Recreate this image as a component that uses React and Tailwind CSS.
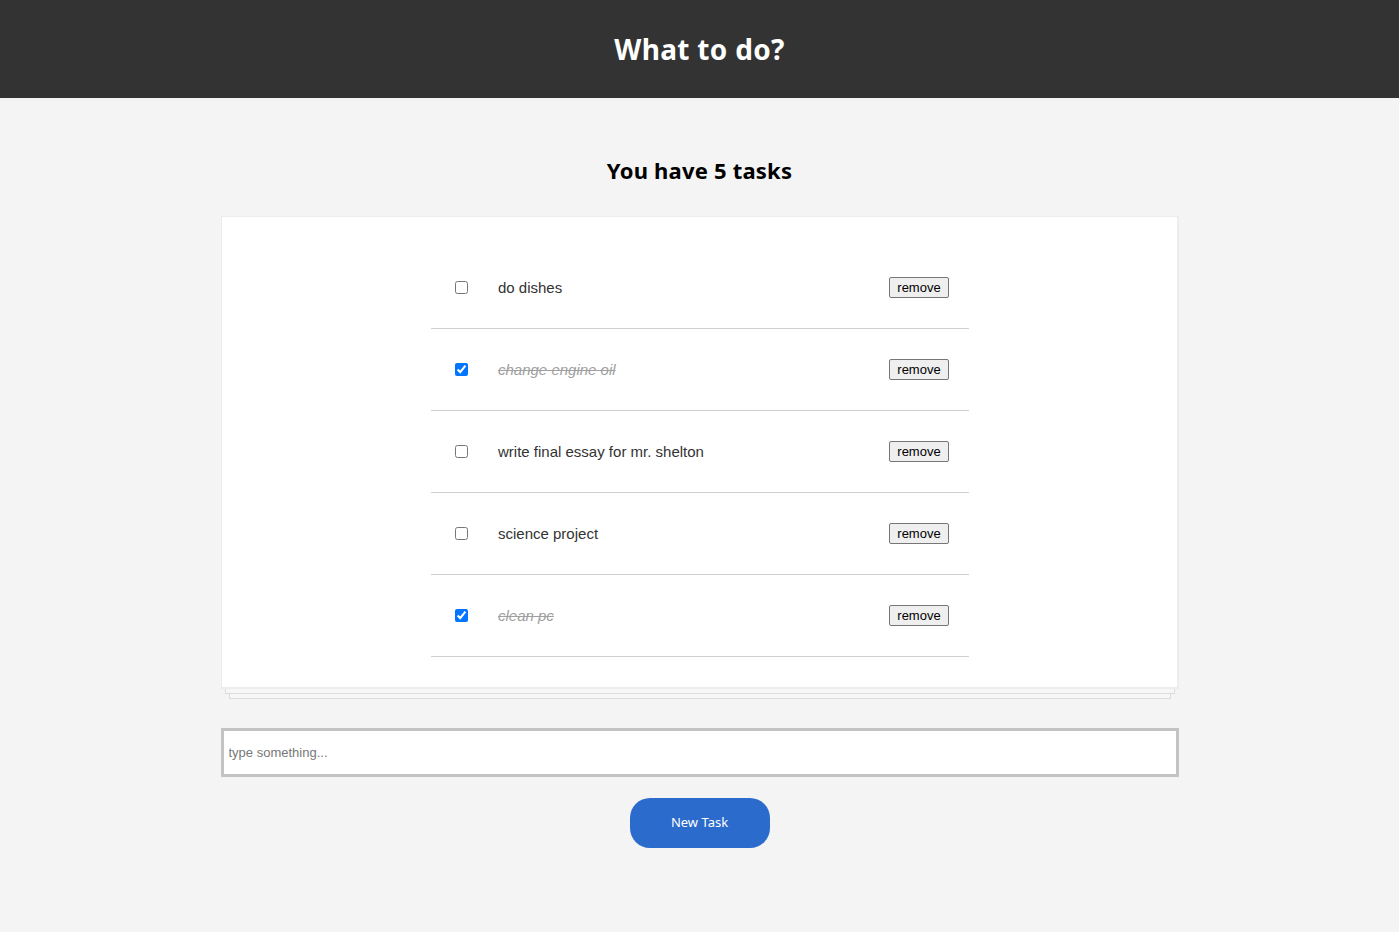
import React, { useState } from 'react';

const initialTasks = [
  { id: 1, text: 'do dishes', done: false },
  { id: 2, text: 'change engine oil', done: true },
  { id: 3, text: 'write final essay for mr. shelton', done: false },
  { id: 4, text: 'science project', done: false },
  { id: 5, text: 'clean pc', done: true },
];

const App = () => {
  const [tasks, setTasks] = useState(initialTasks);
  const [draft, setDraft] = useState('');

  const toggle = (id) => {
    setTasks((prev) => prev.map((t) => (t.id === id ? { ...t, done: !t.done } : t)));
  };

  const remove = (id) => {
    setTasks((prev) => prev.filter((t) => t.id !== id));
  };

  const addTask = () => {
    if (!draft.trim()) return;
    setTasks((prev) => [...prev, { id: Date.now(), text: draft, done: false }]);
    setDraft('');
  };

  return (
    <div className="min-h-screen bg-[#f4f4f4] font-['Noto_Sans',sans-serif]">
      <header className="h-[98px] bg-[#333333] flex items-center justify-center">
        <h1 className="text-[28px] font-bold text-white tracking-[0.3px]">What to do?</h1>
      </header>

      <main className="w-[958px] mx-auto pt-[54px]">
        <h2 className="text-[22px] font-bold text-black text-center leading-[36px] tracking-[0.2px]">
          You have {tasks.length} tasks
        </h2>

        {/* task card with stacked paper look */}
        <div className="mt-[28px]">
          <div className="bg-white border-l border-t border-r-2 border-b-2 border-[#ececec] pt-[30px] pb-[30px]">
            <ul className="w-[538px] mx-auto translate-x-[1px]">
              {tasks.map((task) => (
                <li
                  key={task.id}
                  className="h-[82px] flex items-center border-b border-[#cfcfcf] pl-[24px] pr-[20px]"
                >
                  <input
                    type="checkbox"
                    checked={task.done}
                    onChange={() => toggle(task.id)}
                    className="w-[13px] h-[13px] m-0 accent-[#0075ff]"
                  />
                  <span
                    className={`ml-[30px] pt-[2px] flex-1 text-[15px] font-['Liberation_Sans',Arial,sans-serif] ${
                      task.done ? 'italic line-through text-[#a0a0a0]' : 'text-[#333333]'
                    }`}
                  >
                    {task.text}
                  </span>
                  <button
                    onClick={() => remove(task.id)}
                    className="h-[21px] w-[60px] border border-[#767676] rounded-[2px] bg-[#efefef] text-[13px] text-black font-['Liberation_Sans',Arial,sans-serif] leading-none"
                  >
                    remove
                  </button>
                </li>
              ))}
            </ul>
          </div>
          <div className="mx-[4px] h-[5px] bg-[#f7f7f7] border-x border-b border-[#dcdcdc]" />
          <div className="mx-[8px] h-[5px] bg-[#f7f7f7] border-x border-b border-[#dcdcdc]" />
        </div>

        <input
          type="text"
          value={draft}
          onChange={(e) => setDraft(e.target.value)}
          placeholder="type something..."
          className="mt-[29px] block w-full h-[49px] bg-white border-[3px] border-[#c3c3c3] px-[5px] text-[13px] text-[#333] placeholder:text-[#777777] font-['Liberation_Sans',Arial,sans-serif] outline-none"
        />

        <div className="flex justify-center mt-[21px]">
          <button
            onClick={addTask}
            className="w-[140px] h-[50px] rounded-[20px] bg-[#2b6bcc] text-white text-[13px]"
          >
            New Task
          </button>
        </div>
      </main>
    </div>
  );
};

export default App;
